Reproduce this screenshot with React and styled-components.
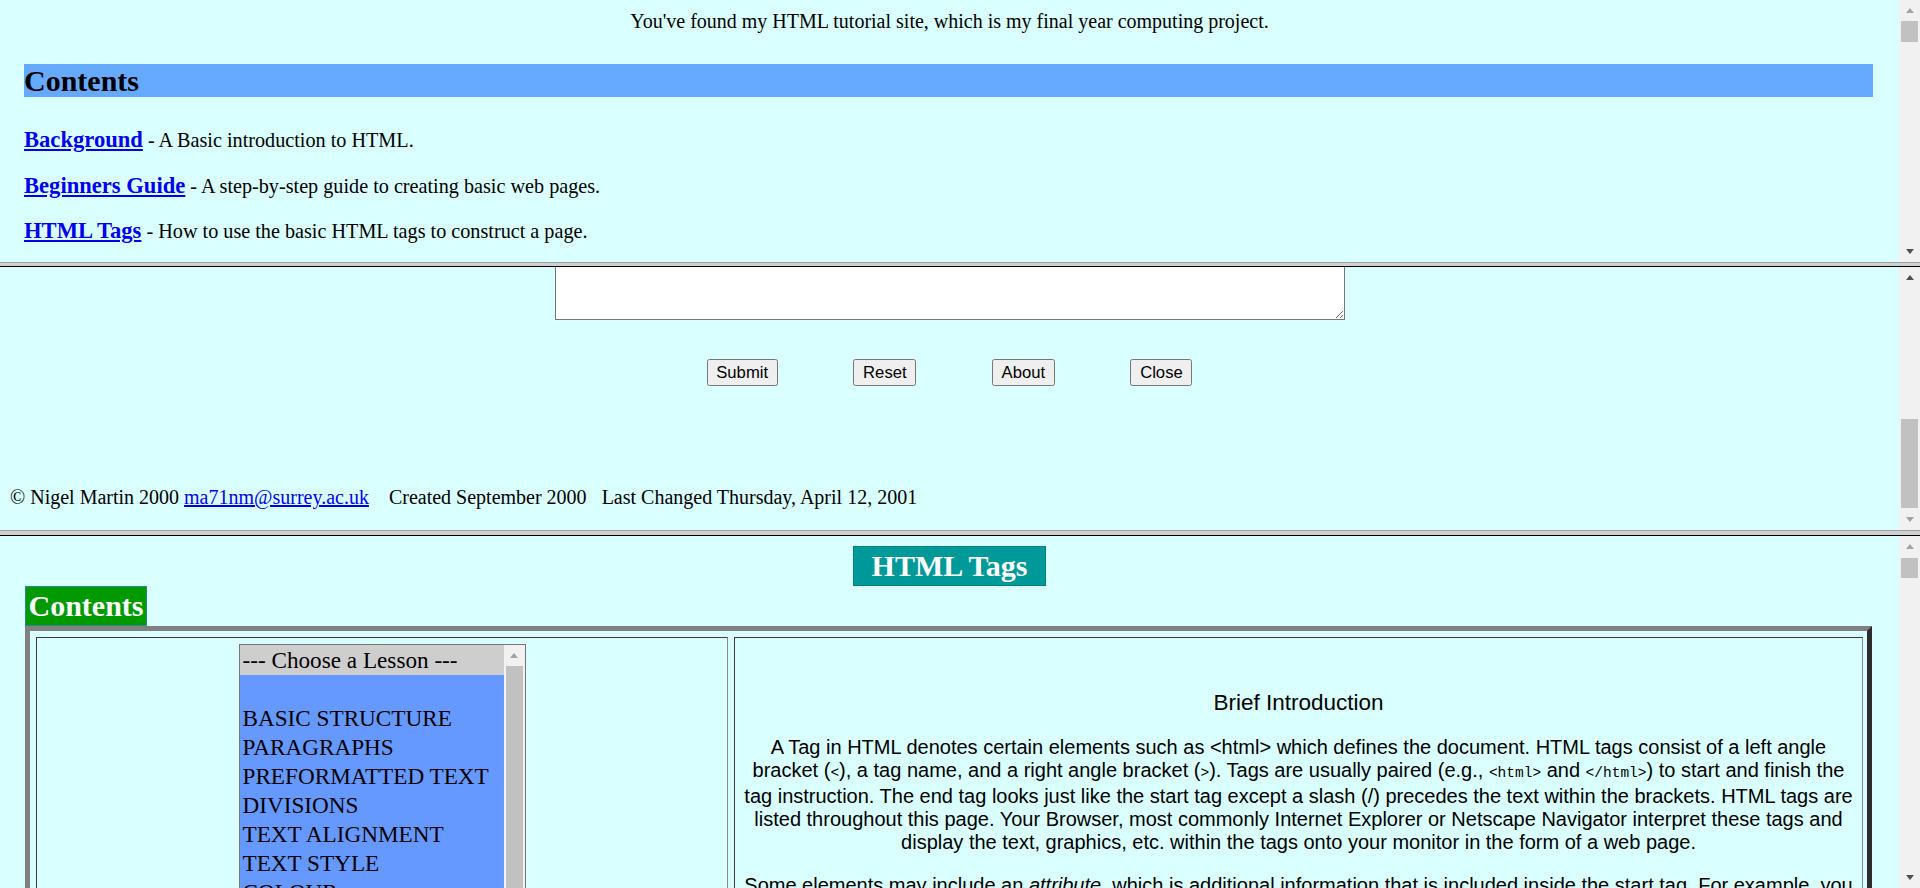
import React from "react";
import styled, { createGlobalStyle } from "styled-components";

const GlobalStyle = createGlobalStyle`
  html, body {
    margin: 0;
    padding: 0;
    height: 100%;
    overflow: hidden;
    background: #daffff;
  }
  #root {
    height: 100%;
  }
`;

const Frameset = styled.div`
  display: flex;
  flex-direction: column;
  height: 888px;
  font-family: "Liberation Serif", "Times New Roman", serif;
  color: #000;
`;

const FrameWindow = styled.div`
  display: flex;
  flex: none;
  height: ${props => props.$height}px;
  background: #daffff;
`;

const FrameBody = styled.div`
  flex: 1;
  min-width: 0;
  overflow: hidden;
`;

const FrameBorder = styled.div`
  flex: none;
  box-sizing: border-box;
  height: ${props => props.$size}px;
  background: #d0d0d0;
  border-top: 1px solid #a0a0a0;
  border-bottom: 1px solid #000;
`;

/* scrollbars of the frames and the list box */
const ScrollTrack = styled.div`
  flex: none;
  width: 21px;
  display: flex;
  flex-direction: column;
  background: #f1f1f1;
`;

const ScrollButton = styled.div`
  flex: none;
  height: 21px;
  display: flex;
  align-items: center;
  justify-content: center;
  &::after {
    content: "";
    width: 0;
    height: 0;
    border-left: 4.5px solid transparent;
    border-right: 4.5px solid transparent;
    ${props =>
      props.$dir === "up"
        ? `border-bottom: 5px solid ${props.$active ? "#505050" : "#a3a3a3"};`
        : `border-top: 5px solid ${props.$active ? "#505050" : "#a3a3a3"};`}
  }
`;

const ScrollGutter = styled.div`
  flex: 1;
  min-height: 0;
  padding: 0 2px;
`;

const ScrollThumb = styled.div`
  margin-top: ${props => props.$offset}px;
  height: ${props => props.$size}px;
  background: #c1c1c1;
`;

const Scrollbar = ({ offset, size, upActive, downActive }) => (
  <ScrollTrack>
    <ScrollButton $dir="up" $active={upActive} />
    <ScrollGutter>
      <ScrollThumb $offset={offset} $size={size} />
    </ScrollGutter>
    <ScrollButton $dir="down" $active={downActive} />
  </ScrollTrack>
);

/* top frame */
const Intro = styled.p`
  margin: 0;
  padding-top: 10px;
  text-align: center;
  font-size: 20px;
  line-height: 23px;
`;

const SectionBar = styled.h2`
  margin: 31px 26px 0 24px;
  background: #66aaff;
  font-size: 30px;
  line-height: 33px;
  font-weight: bold;
`;

const EntryList = styled.div`
  display: flex;
  flex-direction: column;
  gap: 19.5px;
  margin: 30px 0 0 24px;
`;

const Entry = styled.div`
  font-size: 20.2px;
  line-height: 26px;
  white-space: nowrap;
`;

const EntryLink = styled.a`
  color: #0000ee;
  font-size: 22.6px;
  font-weight: bold;
  text-decoration: underline;
`;

/* middle frame */
const Notes = styled.textarea`
  display: block;
  box-sizing: border-box;
  width: 790px;
  height: 53px;
  margin: 0 auto;
  border: 1.25px solid #767676;
  border-top: none;
  background: #fff;
  resize: both;
`;

const ButtonRow = styled.div`
  display: flex;
  justify-content: center;
  gap: 75.5px;
  margin-top: 39px;
`;

const FormButton = styled.button`
  box-sizing: border-box;
  height: 27px;
  padding: 1px 8.75px;
  font-family: "Liberation Sans", Arial, sans-serif;
  font-size: 16.67px;
  color: #000;
  background: #efefef;
  border: 1.25px solid #767676;
  border-radius: 2.5px;
`;

const Footer = styled.div`
  margin-top: 100px;
  padding-left: 10px;
  font-size: 20px;
  line-height: 23px;
  white-space: pre;

  a {
    color: #0000ee;
    text-decoration: underline;
  }
`;

/* bottom frame */
const TitleRow = styled.div`
  display: flex;
  justify-content: center;
  padding-top: 10px;
`;

const TitleBadge = styled.h1`
  margin: 0;
  box-sizing: border-box;
  height: 40px;
  padding: 0 18px;
  background: #009999;
  border: 1px solid #008080;
  color: #fff;
  font-size: 30px;
  line-height: 38px;
  font-weight: bold;
`;

const ContentsBadge = styled.h2`
  display: inline-block;
  margin: 0 0 0 25px;
  box-sizing: border-box;
  height: 40px;
  padding: 0 2.5px;
  background: #009900;
  border: 1px solid #2e8b8b;
  color: #fff;
  font-size: 30px;
  line-height: 38px;
  font-weight: bold;
  vertical-align: top;
`;

const LessonTable = styled.div`
  display: grid;
  grid-template-columns: 692px minmax(0, 1fr);
  column-gap: 6px;
  margin: 0 27px 0 25px;
  padding: 6px 4px 0 6px;
  border: 5px solid;
  border-color: #808080 #2d2d2d #2d2d2d #808080;
`;

const Cell = styled.div`
  border: 1px solid;
  border-color: #3c3c3c #8a8a8a #8a8a8a #3c3c3c;
  min-height: 600px;
`;

const MenuCell = styled(Cell)`
  display: flex;
  justify-content: center;
  align-items: flex-start;
  padding-top: 6px;
`;

const ListBox = styled.div`
  display: flex;
  width: 287px;
  height: 520px;
  box-sizing: border-box;
  border: 1.25px solid #767676;
  background: #6699ff;
`;

const OptionList = styled.div`
  flex: 1;
  min-width: 0;
  overflow: hidden;
`;

const Option = styled.div`
  height: ${props => (props.$header ? 30 : 29)}px;
  padding-left: 3px;
  background: ${props => (props.$header ? "#cecece" : "#6699ff")};
  font-size: 23.2px;
  line-height: ${props => (props.$header ? 30 : 29)}px;
  white-space: nowrap;
`;

const TextCell = styled(Cell)`
  min-width: 0;
  overflow: hidden;
  padding: 52px 4px 0;
  text-align: center;
  font-family: "Liberation Sans", Arial, sans-serif;
`;

const Heading = styled.h3`
  margin: 0;
  font-size: 22.5px;
  line-height: 26px;
  font-weight: normal;
`;

const Para = styled.p`
  margin: 20px 0 0;
  font-size: 20px;
  line-height: 23px;
  white-space: nowrap;

  code {
    font-family: "Liberation Mono", "Courier New", monospace;
    font-size: 14.5px;
  }
`;

const lessons = [
  "",
  "BASIC STRUCTURE",
  "PARAGRAPHS",
  "PREFORMATTED TEXT",
  "DIVISIONS",
  "TEXT ALIGNMENT",
  "TEXT STYLE",
  "COLOUR",
  "LISTS",
  "LINKS",
  "IMAGES",
  "TABLES",
  "FORMS",
  "FRAMES",
];

const contents = [
  ["Background", "A Basic introduction to HTML."],
  ["Beginners Guide", "A step-by-step guide to creating basic web pages."],
  ["HTML Tags", "How to use the basic HTML tags to construct a page."],
];

const App = () => {
  return (
    <>
      <GlobalStyle />
      <Frameset>
        <FrameWindow $height={262}>
          <FrameBody>
            <Intro>You've found my HTML tutorial site, which is my final year computing project.</Intro>
            <SectionBar>Contents</SectionBar>
            <EntryList>
              {contents.map(([name, text]) => (
                <Entry key={name}>
                  <EntryLink href="#">{name}</EntryLink> - {text}
                </Entry>
              ))}
            </EntryList>
          </FrameBody>
          <Scrollbar offset={0} size={21} upActive={false} downActive />
        </FrameWindow>

        <FrameBorder $size={5} />

        <FrameWindow $height={263}>
          <FrameBody>
            <Notes />
            <ButtonRow>
              <FormButton>Submit</FormButton>
              <FormButton>Reset</FormButton>
              <FormButton>About</FormButton>
              <FormButton>Close</FormButton>
            </ButtonRow>
            <Footer>
              © Nigel Martin 2000 <a href="#">ma71nm@surrey.ac.uk</a>{"    "}Created September 2000{"   "}Last Changed Thursday, April 12, 2001
            </Footer>
          </FrameBody>
          <Scrollbar offset={131} size={89} upActive downActive={false} />
        </FrameWindow>

        <FrameBorder $size={6} />

        <FrameWindow $height={352}>
          <FrameBody>
            <TitleRow>
              <TitleBadge>HTML Tags</TitleBadge>
            </TitleRow>
            <ContentsBadge>Contents</ContentsBadge>
            <LessonTable>
              <MenuCell>
                <ListBox>
                  <OptionList>
                    <Option $header>--- Choose a Lesson ---</Option>
                    {lessons.map((lesson, i) => (
                      <Option key={i}>{lesson}</Option>
                    ))}
                  </OptionList>
                  <ScrollTrack>
                    <ScrollButton $dir="up" $active={false} />
                    <ScrollGutter>
                      <ScrollThumb $offset={0} $size={400} />
                    </ScrollGutter>
                  </ScrollTrack>
                </ListBox>
              </MenuCell>
              <TextCell>
                <Heading>Brief Introduction</Heading>
                <Para>
                  A Tag in HTML denotes certain elements such as &lt;html&gt; which defines the document. HTML tags consist of a left angle
                  <br />
                  bracket (<code>&lt;</code>), a tag name, and a right angle bracket (<code>&gt;</code>). Tags are usually paired (e.g., <code>&lt;html&gt;</code> and <code>&lt;/html&gt;</code>) to start and finish the
                  <br />
                  tag instruction. The end tag looks just like the start tag except a slash (/) precedes the text within the brackets. HTML tags are
                  <br />
                  listed throughout this page. Your Browser, most commonly Internet Explorer or Netscape Navigator interpret these tags and
                  <br />
                  display the text, graphics, etc. within the tags onto your monitor in the form of a web page.
                </Para>
                <Para>
                  Some elements may include an <i>attribute</i>, which is additional information that is included inside the start tag. For example, you
                </Para>
              </TextCell>
            </LessonTable>
          </FrameBody>
          <Scrollbar offset={1} size={20} upActive={false} downActive />
        </FrameWindow>
      </Frameset>
    </>
  );
};

export default App;
